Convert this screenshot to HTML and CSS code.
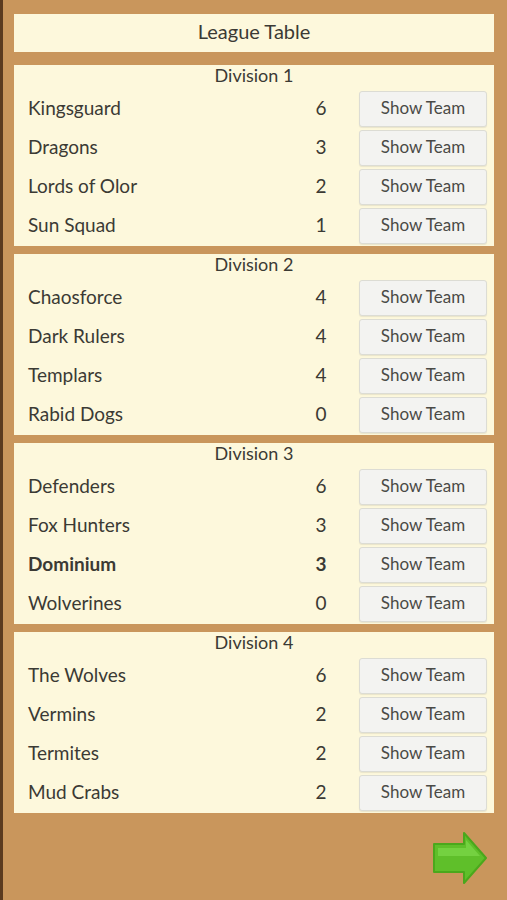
FILE: index.html
```html
<!DOCTYPE html>
<html lang="en">
<head>
  <meta charset="UTF-8">
  <title>League Table</title>
  <link rel="stylesheet" href="styles.css">
</head>
<body>

<div class="screen">
  <header class="title">League Table</header>

  <section class="division">
    <h2>Division 1</h2>
    <div class="row"><span class="name">Kingsguard</span><span class="pts">6</span><button>Show Team</button></div>
    <div class="row"><span class="name">Dragons</span><span class="pts">3</span><button>Show Team</button></div>
    <div class="row"><span class="name">Lords of Olor</span><span class="pts">2</span><button>Show Team</button></div>
    <div class="row"><span class="name">Sun Squad</span><span class="pts">1</span><button>Show Team</button></div>
  </section>

  <section class="division">
    <h2>Division 2</h2>
    <div class="row"><span class="name">Chaosforce</span><span class="pts">4</span><button>Show Team</button></div>
    <div class="row"><span class="name">Dark Rulers</span><span class="pts">4</span><button>Show Team</button></div>
    <div class="row"><span class="name">Templars</span><span class="pts">4</span><button>Show Team</button></div>
    <div class="row"><span class="name">Rabid Dogs</span><span class="pts">0</span><button>Show Team</button></div>
  </section>

  <section class="division">
    <h2>Division 3</h2>
    <div class="row"><span class="name">Defenders</span><span class="pts">6</span><button>Show Team</button></div>
    <div class="row"><span class="name">Fox Hunters</span><span class="pts">3</span><button>Show Team</button></div>
    <div class="row mine"><span class="name">Dominium</span><span class="pts">3</span><button>Show Team</button></div>
    <div class="row"><span class="name">Wolverines</span><span class="pts">0</span><button>Show Team</button></div>
  </section>

  <section class="division">
    <h2>Division 4</h2>
    <div class="row"><span class="name">The Wolves</span><span class="pts">6</span><button>Show Team</button></div>
    <div class="row"><span class="name">Vermins</span><span class="pts">2</span><button>Show Team</button></div>
    <div class="row"><span class="name">Termites</span><span class="pts">2</span><button>Show Team</button></div>
    <div class="row"><span class="name">Mud Crabs</span><span class="pts">2</span><button>Show Team</button></div>
  </section>

  <div class="footer">
    <svg class="next" width="56" height="54" viewBox="0 0 56 54">
      <polygon points="2,12 32,12 32,1 54,26 32,51 32,40 2,40" fill="#5fbf2a" stroke="#4aa81c" stroke-width="2" stroke-linejoin="round"/>
      <polygon points="6,16 34,16 34,8 48,24 6,24" fill="#7ed84a" opacity="0.7"/>
    </svg>
  </div>
</div>

</body>
</html>
```

FILE: styles.css
```css
body {
  margin: 0;
  padding: 0;
  background: #c9965c;
  font-family: Lato, "Noto Sans", sans-serif;
  color: #3b3a34;
}
.screen {
  min-height: 900px;
  box-sizing: border-box;
  border-left: 3px solid #5b3b1f;
  padding: 14px 13px 0 11px;
}
.title {
  background: #fdf8dc;
  height: 38px;
  line-height: 35px;
  text-align: center;
  font-size: 20px;
  margin-bottom: 13px;
}
.division {
  background: #fdf8dc;
  padding: 0 7px 1px 14px;
  margin-bottom: 8px;
}
.division h2 {
  margin: 0;
  height: 24px;
  line-height: 21px;
  text-align: center;
  font-size: 18px;
  font-weight: normal;
  padding-right: 7px;
}
.row {
  display: grid;
  grid-template-columns: 1fr 44px 128px;
  column-gap: 16px;
  align-items: center;
  height: 39px;
  font-size: 19px;
}
.row .name,
.row .pts {
  padding-bottom: 3px;
}
.row .pts {
  text-align: center;
}
.row.mine {
  font-weight: bold;
}
.row button {
  height: 36px;
  background: #f3f3f1;
  border: 1px solid #dcdcd4;
  border-radius: 3px;
  box-shadow: 0 1px 1px rgba(0,0,0,0.08);
  font-family: inherit;
  font-size: 17px;
  color: #4a4a46;
  font-weight: normal;
  padding: 0 0 3px;
}
.footer {
  display: flex;
  justify-content: flex-end;
  padding: 11px 6px 0 0;
}
```
